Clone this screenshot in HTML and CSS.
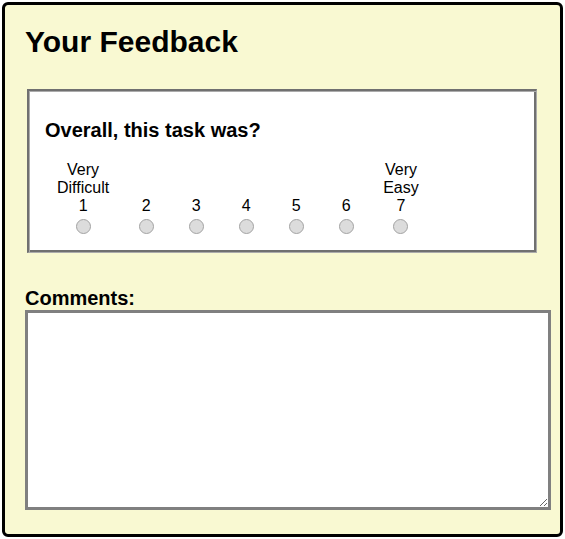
FILE: index.html
```html
<!DOCTYPE html>
<html lang="en">
<head>
<meta charset="utf-8">
<title>Your Feedback</title>
<link rel="stylesheet" href="styles.css">
</head>
<body>
<div class="card">
  <h1 class="title">Your Feedback</h1>
  <div class="panel">
    <h2 class="question">Overall, this task was?</h2>
    <div class="scale">
      <label class="opt"><span class="lbl">Very<br>Difficult<br>1</span><input type="radio" name="rate" class="radio"></label>
      <label class="opt"><span class="lbl">2</span><input type="radio" name="rate" class="radio"></label>
      <label class="opt"><span class="lbl">3</span><input type="radio" name="rate" class="radio"></label>
      <label class="opt"><span class="lbl">4</span><input type="radio" name="rate" class="radio"></label>
      <label class="opt"><span class="lbl">5</span><input type="radio" name="rate" class="radio"></label>
      <label class="opt"><span class="lbl">6</span><input type="radio" name="rate" class="radio"></label>
      <label class="opt"><span class="lbl">Very<br>Easy<br>7</span><input type="radio" name="rate" class="radio"></label>
    </div>
  </div>
  <label class="comments-label" for="comments">Comments:</label>
  <textarea id="comments" class="comments"></textarea>
</div>
</body>
</html>
```

FILE: styles.css
```css
html, body {
  margin: 0;
  padding: 0;
  background: #ffffff;
}

body {
  font-family: "Liberation Sans", Arial, sans-serif;
  color: #000;
}

.card {
  margin: 2px 2px 0 2px;
  border: 3px solid #000;
  border-radius: 6px;
  background: #f9f9d2;
  padding: 0 20px 24px 20px;
}

.title {
  margin: 19px 0 29px 0;
  font-size: 30px;
  line-height: 36px;
  font-weight: bold;
}

.panel {
  margin: 0 3px 0 2px;
  border-style: solid;
  border-width: 2px 1px 1px 2px;
  border-color: #707070 #ababab #ababab #707070;
  box-shadow: inset 1px 1px 0 0 #ababab, inset -2px -2px 0 0 #707070;
  background: #fff;
  padding: 28px 17px 18px 16px;
}

.question {
  margin: 0 0 19px 0;
  font-size: 20px;
  line-height: 23px;
  font-weight: bold;
}

.scale {
  display: flex;
  align-items: flex-end;
}

.opt {
  display: flex;
  flex-direction: column;
  align-items: center;
  justify-content: flex-end;
  padding: 0 12px;
  min-width: 26px;
  font-size: 16px;
  line-height: 18px;
  text-align: center;
}

.lbl {
  display: block;
}

.radio {
  appearance: none;
  -webkit-appearance: none;
  width: 15px;
  height: 15px;
  margin: 4px 0 0 0;
  border: 1px solid #a3a3a3;
  border-radius: 50%;
  background: #dcdcdc;
  box-sizing: border-box;
}

.comments-label {
  display: block;
  margin-top: 34px;
  font-size: 20px;
  line-height: 23px;
  font-weight: bold;
}

.comments {
  display: block;
  box-sizing: border-box;
  width: 526px;
  height: 200px;
  margin: 0;
  border: 3px solid #808080;
  background: #fff;
  padding: 2px;
  font-family: "Liberation Mono", monospace;
}
```
